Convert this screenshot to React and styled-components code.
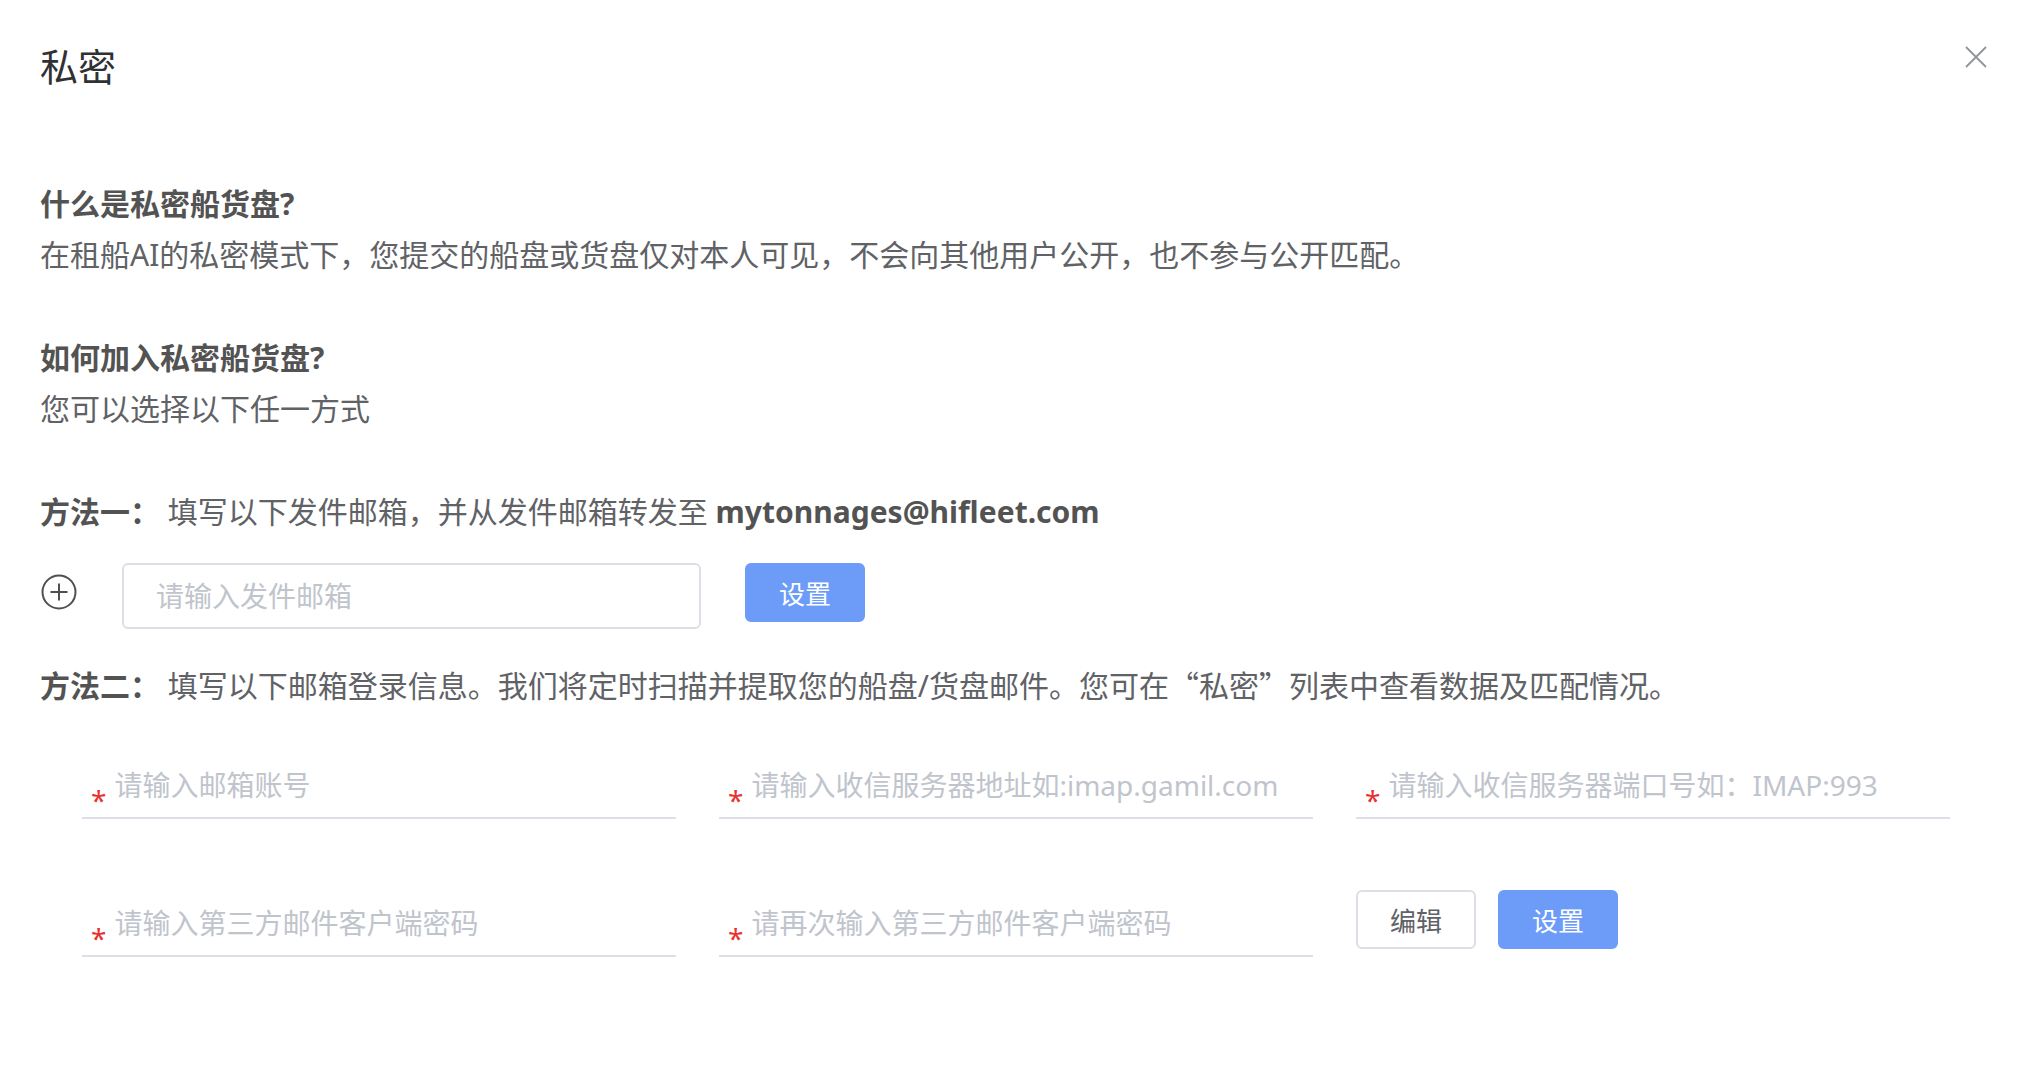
import styled, { createGlobalStyle } from "styled-components";

const GlobalStyle = createGlobalStyle`
  html, body {
    margin: 0;
    padding: 0;
    background: #ffffff;
  }
  body {
    font-family: "Noto Sans", "Noto Sans CJK SC", sans-serif;
  }
  * {
    box-sizing: border-box;
  }
`;

const Page = styled.div`
  min-height: 1079px;
  padding: 40px 46px 0 40px;
  background: #fff;
`;

const Header = styled.div`
  display: flex;
  justify-content: space-between;
  align-items: flex-start;
`;

const Title = styled.h1`
  margin: 0;
  font-size: 38px;
  line-height: 52px;
  font-weight: 400;
  color: #303133;
`;

const CloseButton = styled.button`
  margin-top: 6px;
  padding: 0;
  width: 22px;
  height: 22px;
  border: none;
  background: none;
  cursor: pointer;
  display: flex;
`;

const Section = styled.section`
  margin-top: ${(props) => props.$gap || 52}px;
`;

const Heading = styled.h3`
  margin: 0;
  font-size: 30px;
  line-height: 51px;
  font-weight: 700;
  color: #535353;
`;

const Text = styled.p`
  margin: 0;
  font-size: 30px;
  line-height: 51px;
  color: #606266;
`;

const Strong = styled.b`
  font-weight: 700;
  color: #535353;
`;

const CjkQuote = styled.span`
  font-family: "Noto Sans CJK SC", sans-serif;
`;

const MethodRow = styled.div`
  display: flex;
  align-items: flex-start;
  margin-top: 26px;
`;

const AddIcon = styled.button`
  margin: 11px 45px 0 1px;
  padding: 0;
  width: 36px;
  height: 36px;
  border: none;
  background: none;
  cursor: pointer;
  display: flex;
`;

const BoxInput = styled.input`
  width: 579px;
  height: 66px;
  padding: 0 32px;
  border: 2px solid #dcdfe6;
  border-radius: 6px;
  font-family: inherit;
  font-size: 28px;
  color: #606266;
  outline: none;

  &::placeholder {
    color: #c0c4cc;
  }
`;

const Button = styled.button`
  width: 120px;
  height: 59px;
  border-radius: 6px;
  border: 2px solid ${(props) => (props.$primary ? "#6c9cf7" : "#dcdfe6")};
  background: ${(props) => (props.$primary ? "#6c9cf7" : "#fff")};
  color: ${(props) => (props.$primary ? "#fff" : "#606266")};
  font-family: inherit;
  font-size: 26px;
  cursor: pointer;
  margin-left: ${(props) => props.$ml || 0}px;
`;

const FieldGrid = styled.div`
  display: grid;
  grid-template-columns: repeat(3, 594px);
  column-gap: 43px;
  row-gap: 71px;
  margin-top: 41px;
  margin-left: 42px;
`;

const Field = styled.label`
  display: flex;
  align-items: center;
  height: 67px;
  padding-left: 9px;
  border-bottom: 2px solid #dcdfe6;
`;

const Required = styled.span`
  padding-top: 30px;
  font-size: 28px;
  line-height: 1;
  color: #e8312f;
`;

const LineInput = styled.input`
  flex: 1;
  min-width: 0;
  height: 100%;
  padding: 0 0 0 8px;
  border: none;
  background: transparent;
  font-family: inherit;
  font-size: 28px;
  color: #606266;
  outline: none;

  &::placeholder {
    color: #c0c4cc;
  }
`;

const ButtonGroup = styled.div`
  display: flex;
  align-items: flex-start;
`;

const fields = [
  "请输入邮箱账号",
  "请输入收信服务器地址如:imap.gamil.com",
  "请输入收信服务器端口号如：IMAP:993",
  "请输入第三方邮件客户端密码",
  "请再次输入第三方邮件客户端密码",
];

const App = () => {
  return (
    <Page>
      <GlobalStyle />
      <Header>
        <Title>私密</Title>
        <CloseButton aria-label="close">
          <svg width="22" height="22" viewBox="0 0 22 22">
            <path d="M1 1 L21 21 M21 1 L1 21" stroke="#909399" strokeWidth="1.8" fill="none" />
          </svg>
        </CloseButton>
      </Header>

      <Section $gap={86}>
        <Heading>什么是私密船货盘?</Heading>
        <Text>在租船AI的私密模式下，您提交的船盘或货盘仅对本人可见，不会向其他用户公开，也不参与公开匹配。</Text>
      </Section>

      <Section>
        <Heading>如何加入私密船货盘?</Heading>
        <Text>您可以选择以下任一方式</Text>
      </Section>

      <Section>
        <Text>
          <Strong>方法一：</Strong> 填写以下发件邮箱，并从发件邮箱转发至 <Strong>mytonnages@hifleet.com</Strong>
        </Text>
        <MethodRow>
          <AddIcon aria-label="add">
            <svg width="36" height="36" viewBox="0 0 36 36">
              <circle cx="18" cy="18" r="16.5" stroke="#4f4f4f" strokeWidth="2" fill="none" />
              <path d="M18 9.5 V26.5 M9.5 18 H26.5" stroke="#4f4f4f" strokeWidth="2" fill="none" />
            </svg>
          </AddIcon>
          <BoxInput placeholder="请输入发件邮箱" />
          <Button $primary $ml={44}>设置</Button>
        </MethodRow>
      </Section>

      <Section $gap={30}>
        <Text>
          <Strong>方法二：</Strong> 填写以下邮箱登录信息。我们将定时扫描并提取您的船盘/货盘邮件。您可在<CjkQuote>“</CjkQuote>私密<CjkQuote>”</CjkQuote>列表中查看数据及匹配情况。
        </Text>
        <FieldGrid>
          {fields.map((placeholder) => (
            <Field key={placeholder}>
              <Required>*</Required>
              <LineInput placeholder={placeholder} />
            </Field>
          ))}
          <ButtonGroup>
            <Button>编辑</Button>
            <Button $primary $ml={22}>设置</Button>
          </ButtonGroup>
        </FieldGrid>
      </Section>
    </Page>
  );
};

export default App;
